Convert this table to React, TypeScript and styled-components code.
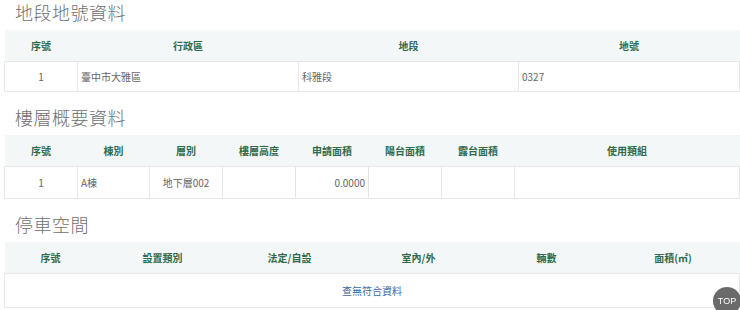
import { FC } from "react";
import styled, { createGlobalStyle } from "styled-components";

const GlobalStyle = createGlobalStyle`
  body {
    margin: 0;
    background: #fff;
    font-family: "Noto Sans CJK TC", "Noto Sans", sans-serif;
  }
`;

interface TColumn {
  title: string;
  width: number;
  align?: "left" | "center" | "right";
}

interface TSection {
  title: string;
  columns: TColumn[];
  rows: string[][];
  bodyHeight: number;
}

const sections: TSection[] = [
  {
    title: "地段地號資料",
    bodyHeight: 29,
    columns: [
      { title: "序號", width: 73, align: "center" },
      { title: "行政區", width: 221 },
      { title: "地段", width: 220 },
      { title: "地號", width: 221 },
    ],
    rows: [["1", "臺中市大雅區", "科雅段", "0327"]],
  },
  {
    title: "樓層概要資料",
    bodyHeight: 31,
    columns: [
      { title: "序號", width: 73, align: "center" },
      { title: "棟別", width: 72 },
      { title: "層別", width: 73, align: "center" },
      { title: "樓層高度", width: 73, align: "right" },
      { title: "申請面積", width: 73, align: "right" },
      { title: "陽台面積", width: 73, align: "right" },
      { title: "露台面積", width: 73, align: "right" },
      { title: "使用類組", width: 225 },
    ],
    rows: [["1", "A棟", "地下層002", "", "0.0000", "", "", ""]],
  },
  {
    title: "停車空間",
    bodyHeight: 33,
    columns: [
      { title: "序號", width: 92 },
      { title: "設置類別", width: 132 },
      { title: "法定/自設", width: 122 },
      { title: "室內/外", width: 136 },
      { title: "輛數", width: 120 },
      { title: "面積(㎡)", width: 133 },
    ],
    rows: [],
  },
];

const DataTable: FC<TSection> = ({ title, columns, rows, bodyHeight }) => (
  <Section>
    <Heading>{title}</Heading>
    <Table>
      <colgroup>
        {columns.map((c) => (
          <col key={c.title} style={{ width: c.width }} />
        ))}
      </colgroup>
      <thead>
        <tr>
          {columns.map((c) => (
            <Th key={c.title}>{c.title}</Th>
          ))}
        </tr>
      </thead>
      <tbody>
        {rows.length === 0 ? (
          <tr>
            <Td $h={bodyHeight} $align="center" colSpan={columns.length}>
              <Empty>查無符合資料</Empty>
            </Td>
          </tr>
        ) : (
          rows.map((row, i) => (
            <tr key={i}>
              {row.map((cell, j) => (
                <Td key={j} $h={bodyHeight} $align={columns[j].align || "left"}>
                  {cell}
                </Td>
              ))}
            </tr>
          ))
        )}
      </tbody>
    </Table>
  </Section>
);

const App = () => (
  <>
    <GlobalStyle />
    <Page>
      {sections.map((s) => (
        <DataTable key={s.title} {...s} />
      ))}
    </Page>
    <TopButton>TOP</TopButton>
  </>
);

const Page = styled.div`
  padding: 0 1px 0 4px;
  display: flex;
  flex-direction: column;
  gap: 13px;
`;

const Section = styled.section``;

const Heading = styled.h2`
  margin: 0 0 6px;
  padding-left: 11px;
  font-size: 18px;
  line-height: 24px;
  font-weight: 300;
  letter-spacing: 0.5px;
  color: #707070;
`;

const Table = styled.table`
  width: 735px;
  table-layout: fixed;
  border-collapse: collapse;
  font-size: 10px;
`;

const Th = styled.th`
  height: 31px;
  padding: 0 3px;
  background: #f4f7f8;
  color: #2f6a4c;
  font-weight: 700;
  text-align: center;
`;

const Td = styled.td<{ $h: number; $align: string }>`
  height: ${(p) => p.$h}px;
  padding: 0 3px;
  border: 1px solid #e6e6e6;
  color: #666;
  text-align: ${(p) => p.$align};
`;

const Empty = styled.span`
  color: #3d6aa6;
`;

const TopButton = styled.div`
  position: fixed;
  right: -1px;
  bottom: -5px;
  width: 28px;
  height: 28px;
  border-radius: 50%;
  background: #6a6a6a;
  color: #fff;
  font-family: "Liberation Sans", sans-serif;
  font-size: 9px;
  display: flex;
  align-items: center;
  justify-content: center;
`;

export default App;
